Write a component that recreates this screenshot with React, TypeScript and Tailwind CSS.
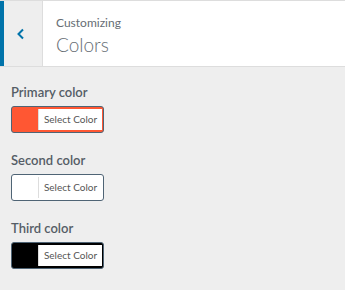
const controls = [
  { label: "Primary color", color: "bg-[#ff5733]" },
  { label: "Second color", color: "bg-white" },
  { label: "Third color", color: "bg-black" },
];

export default function App() {
  return (
    <div className="w-[345px] h-[290px] bg-[#eeeeee] font-['Lato',sans-serif] text-[#555d66]">
      {/* header */}
      <div className="flex h-[67px] bg-white border-y border-[#dddddd]">
        <button className="w-[43px] flex items-center justify-center pr-[4px] bg-[#eeeeee] border-l-4 border-[#0073aa] border-r border-r-[#dddddd]">
          <svg width="10" height="12" viewBox="0 0 10 12" fill="none">
            <path d="M7 1.5L2.5 6L7 10.5" stroke="#0073aa" strokeWidth="2" />
          </svg>
        </button>
        <div className="pl-[13px] pt-[13px]">
          <div className="text-[12px] leading-[17px] text-[#666d74]">Customizing</div>
          <div className="text-[19px] leading-[26px] font-light text-[#666d74] mt-[1px]">Colors</div>
        </div>
      </div>

      {/* controls */}
      <div className="pl-[11px] pt-[15px]">
        {controls.map((c) => (
          <div key={c.label} className="mb-[17px]">
            <div className="text-[13px] leading-[20px] font-semibold mb-[4px]">{c.label}</div>
            <button
              className={`w-[93px] h-[27px] rounded-[3px] border border-[#4f6475] ${c.color} flex justify-end py-[2px] pr-[1px]`}
            >
              <span className="h-full w-[64px] bg-white border-l border-[#dddddd] text-[10px] leading-[21px] text-[#555] flex items-center justify-center">
                Select Color
              </span>
            </button>
          </div>
        ))}
      </div>
    </div>
  );
}
